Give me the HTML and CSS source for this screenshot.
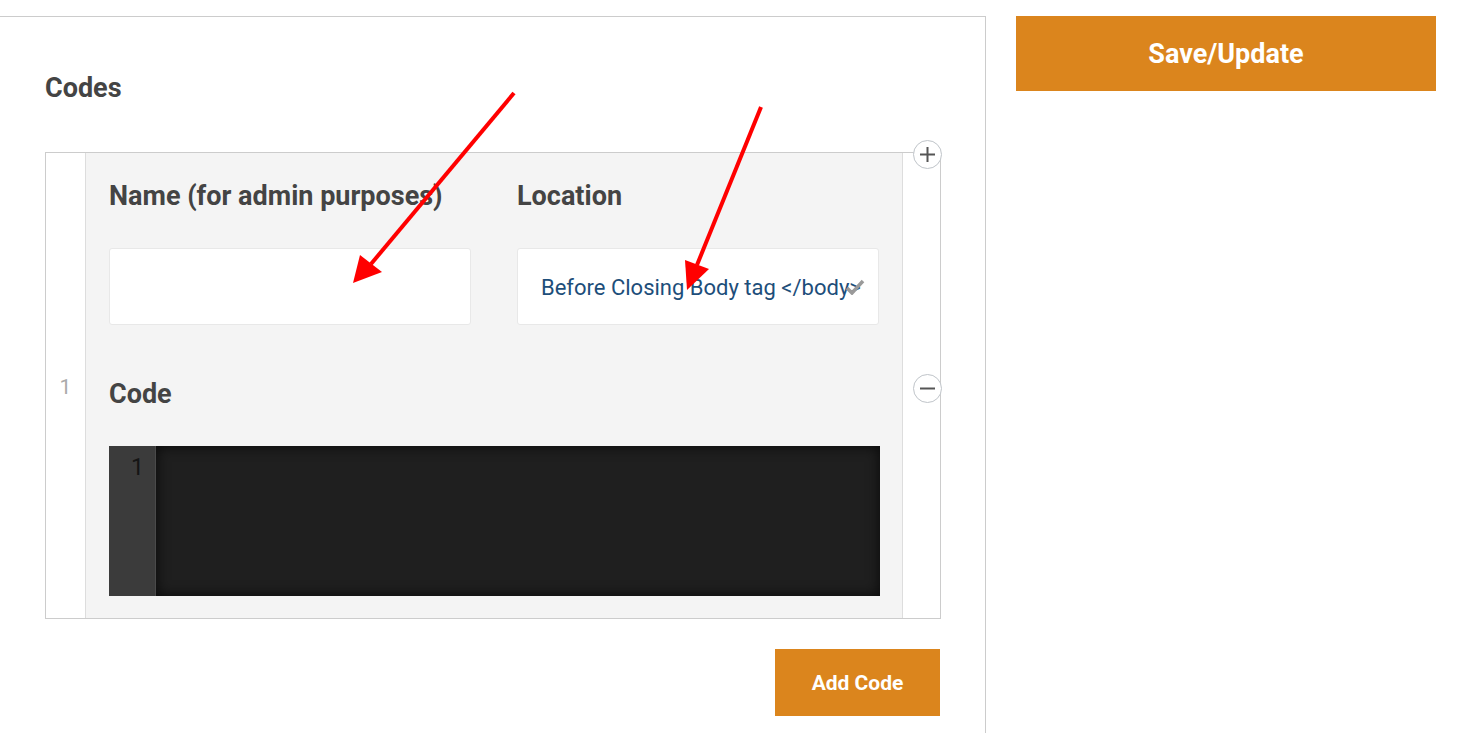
FILE: index.html
```html
<!DOCTYPE html>
<html lang="en">
<head>
    <meta charset="UTF-8">
    <meta name="viewport" content="width=device-width, initial-scale=1.0">
    <title>Codes</title>
    <link rel="stylesheet" href="styles.css">
</head>
<body>
<div class="page">
    <div class="main-panel">
        <h2 class="section-title">Codes</h2>
        <div class="repeater">
            <div class="row">
                <div class="row-handle">1</div>
                <div class="row-fields">
                    <div class="field-pair">
                        <div class="field">
                            <label class="field-label">Name (for admin purposes)</label>
                            <input class="text-input" type="text">
                        </div>
                        <div class="field">
                            <label class="field-label">Location</label>
                            <div class="select-box">
                                <span class="select-value">Before Closing Body tag &lt;/body&gt;</span>
                                <svg class="select-check" width="20" height="16" viewBox="0 0 20 16">
                                    <path d="M2 9 L7 14 L18 2" fill="none" stroke="#9a9a9a" stroke-width="3.5"/>
                                </svg>
                            </div>
                        </div>
                    </div>
                    <div class="field">
                        <label class="field-label">Code</label>
                        <div class="code-editor">
                            <div class="gutter">1</div>
                            <div class="code-area"></div>
                        </div>
                    </div>
                </div>
                <div class="row-actions">
                    <span class="circle-btn add-row">
                        <svg width="15" height="15" viewBox="0 0 15 15"><path d="M7.5 0 V15 M0 7.5 H15" stroke="#555" stroke-width="2"/></svg>
                    </span>
                    <span class="circle-btn remove-row">
                        <svg width="15" height="15" viewBox="0 0 15 15"><path d="M0 7.5 H15" stroke="#555" stroke-width="2"/></svg>
                    </span>
                </div>
            </div>
        </div>
        <div class="repeater-footer">
            <button class="btn btn-add">Add Code</button>
        </div>
    </div>
    <div class="sidebar">
        <button class="btn btn-save">Save/Update</button>
    </div>
</div>

<!-- annotation arrows -->
<svg class="annotations" width="1466" height="733" viewBox="0 0 1466 733">
    <line x1="514" y1="93" x2="371" y2="264" stroke="#f00" stroke-width="4"/>
    <polygon points="353,283 360,255 382,272" fill="#f00"/>
    <line x1="761" y1="107" x2="697" y2="265" stroke="#f00" stroke-width="4"/>
    <polygon points="687,290 685,260 709,269" fill="#f00"/>
</svg>
</body>
</html>
```

FILE: styles.css
```css
*{
    margin: 0;
    padding: 0;
    box-sizing: border-box;
}
body{
    font-family: Roboto, "Liberation Sans", sans-serif;
    color: #444;
    background: #fff;
    overflow: hidden;
}
.page{
    display: flex;
    align-items: flex-start;
    padding-top: 16px;
}
.main-panel{
    width: 986px;
    min-height: 717px;
    border-top: 1px solid #ccc;
    border-right: 1px solid #ccc;
    padding: 56px 44px 0 45px;
}
.section-title{
    font-size: 27px;
    line-height: 30px;
    font-weight: 700;
    margin-bottom: 49px;
}
.repeater{
    border: 1px solid #ccc;
    background: #fff;
}
.row{
    display: flex;
    position: relative;
}
.row-handle{
    flex-shrink: 0;
    width: 40px;
    border-right: 1px solid #ddd;
    display: flex;
    align-items: center;
    justify-content: center;
    font-size: 21px;
    color: #aaa;
    padding-top: 2px;
}
.row-fields{
    flex-shrink: 0;
    width: 817px;
    background: #f4f4f4;
    padding: 28px 22px 22px 23px;
    border-right: 1px solid #ddd;
}
.row-actions{
    flex-shrink: 0;
    width: 38px;
    display: flex;
    align-items: center;
    padding-left: 10px;
    padding-top: 5px;
}
.circle-btn{
    flex-shrink: 0;
    width: 29px;
    height: 29px;
    border-radius: 50%;
    border: 1px solid #bfc4c9;
    background: #fff;
    display: flex;
    align-items: center;
    justify-content: center;
}
.add-row{
    position: absolute;
    right: -2px;
    top: -13px;
}
.field-pair{
    display: flex;
    gap: 46px;
    margin-bottom: 54px;
}
.field-pair .field{
    width: 362px;
}
.field-label{
    display: block;
    font-size: 27px;
    line-height: 30px;
    font-weight: 700;
    margin-bottom: 37px;
}
.text-input{
    display: block;
    width: 100%;
    height: 77px;
    border: 1px solid #e8e8e8;
    border-radius: 3px;
    background: #fff;
    outline: none;
}
.select-box{
    height: 77px;
    border: 1px solid #e8e8e8;
    border-radius: 3px;
    background: #fff;
    display: flex;
    align-items: center;
    padding-left: 23px;
    position: relative;
}
.select-value{
    font-size: 22px;
    color: #1d4e7a;
    white-space: nowrap;
    padding-top: 1px;
}
.select-check{
    position: absolute;
    right: 13px;
    top: 30px;
}
.code-editor{
    display: flex;
    height: 150px;
    margin-top: 1px;
}
.gutter{
    width: 47px;
    background: #3b3b3b;
    border-right: 1px solid #4a4a4a;
    color: #151515;
    font-size: 23px;
    text-align: right;
    padding: 8px 11px 0 0;
}
.code-area{
    flex-grow: 1;
    background: #1f1f1f;
    box-shadow: inset 0 0 14px rgba(0, 0, 0, 0.75);
}
.repeater-footer{
    display: flex;
    justify-content: flex-end;
    padding: 30px 1px 0 0;
}
.btn{
    border: none;
    background: #db851d;
    color: #fff;
    font-family: Roboto, "Liberation Sans", sans-serif;
    font-weight: 700;
}
.btn-add{
    width: 165px;
    height: 67px;
    font-size: 21px;
}
.sidebar{
    margin-left: 30px;
}
.btn-save{
    width: 420px;
    height: 75px;
    font-size: 27px;
}
.annotations{
    position: absolute;
    left: 0;
    top: 0;
    pointer-events: none;
}
```
